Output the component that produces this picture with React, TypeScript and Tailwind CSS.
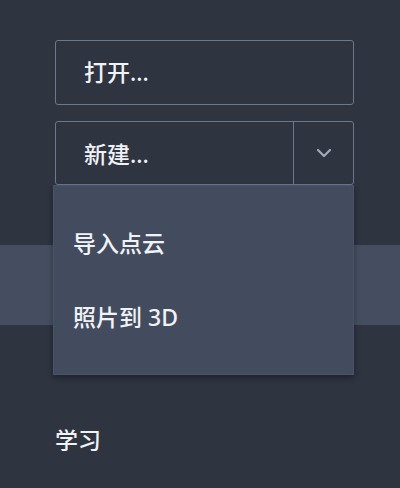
import { ChevronDown } from "lucide-react"

const font = { fontFamily: '"Noto Sans", "Noto Sans CJK SC", sans-serif' }

export default function App() {
  return (
    <div className="h-[488px] w-[400px] overflow-hidden bg-[#2e3440] pt-[40px] text-[#f0f2f6]" style={font}>
      <div className="px-[55px]">
        <button className="flex h-[65px] w-[299px] items-center rounded-[3px] border border-[#6d788b] pl-[28px] text-[23px] font-medium leading-none">
          打开...
        </button>

        {/* split button with its open menu */}
        <div className="relative mt-[16px] w-[299px]">
          <div className="flex h-[64px] rounded-[3px] border border-[#6d788b]">
            <button className="flex flex-1 items-center pl-[28px] pt-[3px] text-[23px] font-medium leading-none">新建...</button>
            <button className="flex w-[60px] items-center justify-center border-l border-[#6d788b]">
              <ChevronDown className="h-[24px] w-[24px] text-[#a3abba]" strokeWidth={2.2} />
            </button>
          </div>
          <div className="absolute left-[-2px] top-[64px] z-10 w-[301px] border border-[#4a5367] bg-[#434c5e] py-[20px] shadow-[0_3px_6px_rgba(0,0,0,0.35)]">
            <div className="flex h-[74px] items-center pl-[19px] text-[23px] font-medium leading-none">导入点云</div>
            <div className="flex h-[74px] items-center pl-[19px] text-[23px] font-medium leading-none">照片到 3D</div>
          </div>
        </div>
      </div>

      <div className="mt-[60px] h-[80px] bg-[#454e61]" />

      <div className="mt-[104px] px-[55px] text-[23px] font-medium leading-none">学习</div>
    </div>
  )
}
